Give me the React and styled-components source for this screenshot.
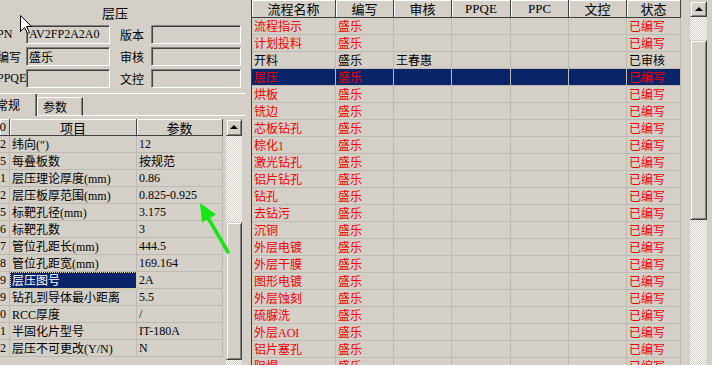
import React from "react";
import styled, { createGlobalStyle, css } from "styled-components";

const BG = "#d4d0c8";
const NAVY = "#0a246a";
const RED = "#f00000";
const LINE = "#bdbab2";

const GlobalStyle = createGlobalStyle`
  html, body { margin: 0; padding: 0; background: ${BG}; }
  body {
    font-family: "Liberation Serif", "Noto Sans CJK SC", serif;
    font-size: 12px;
    color: #000;
  }
  * { box-sizing: border-box; }
`;

const raised = css`
  background: ${BG};
  border: 1px solid;
  border-color: ${BG} #404040 #404040 ${BG};
  box-shadow: inset 1px 1px #fff, inset -1px -1px #808080;
`;

const checker = css`
  background: repeating-conic-gradient(#fff 0 25%, ${BG} 0 50%) 0 0 / 2px 2px;
`;

const Window = styled.div`
  position: relative;
  display: flex;
  width: 712px;
  height: 365px;
  overflow: hidden;
  background: ${BG};
`;

const LeftPanel = styled.div`
  width: 245px;
  flex: none;
  display: flex;
  flex-direction: column;
  overflow: hidden;
`;

const Title = styled.div`
  height: 24px;
  flex: none;
  display: flex;
  align-items: center;
  justify-content: center;
  padding-right: 15px;
  font-size: 13px;
`;

const Form = styled.div`
  flex: none;
  display: grid;
  grid-template-columns: 29px 84px 41px 90px;
  grid-template-rows: repeat(3, 19px);
  row-gap: 3px;
  margin: 1px 0 0 -3px;
`;

const FieldLabel = styled.div`
  display: flex;
  align-items: center;
  white-space: nowrap;
  padding-left: ${(p) => p.$indent || 0}px;
`;

const Field = styled.div`
  border: 1px solid;
  border-color: #808080 #fff #fff #808080;
  box-shadow: inset 1px 1px #404040, inset -1px -1px ${BG};
  padding: 0 2px;
  display: flex;
  align-items: center;
  white-space: nowrap;
  overflow: hidden;
`;

const TabStrip = styled.div`
  flex: none;
  height: 23px;
  margin: 5px 0 0 -10px;
  border-top: 1px solid #fff;
  display: flex;
  align-items: flex-end;
`;

const Tab = styled.div`
  flex: none;
  width: ${(p) => p.$w}px;
  height: ${(p) => (p.$active ? 22 : 19)}px;
  padding-left: 5px;
  display: flex;
  align-items: center;
  border-left: 1px solid #fff;
  border-right: 1px solid #404040;
  box-shadow: inset -1px 0 #808080;
  ${(p) =>
    !p.$active &&
    css`
      border-top: 1px solid #fff;
      border-bottom: 1px solid #fff;
      padding-top: 1px;
    `}
`;

const TabFill = styled.div`
  flex: 1;
  height: 1px;
  background: #fff;
`;

const TabBody = styled.div`
  flex: 1;
  display: flex;
  padding-top: 3px;
  min-height: 0;
`;

const GridBox = styled.div`
  width: ${(p) => p.$w}px;
  flex: none;
  display: flex;
  flex-direction: column;
`;

const Row = styled.div`
  flex: none;
  display: grid;
  grid-template-columns: ${(p) => p.$cols};
  height: ${(p) => p.$h || 17}px;
  background: ${(p) => (p.$selected ? NAVY : "transparent")};
`;

const HeadCell = styled.div`
  border-right: 1px solid #404040;
  border-bottom: 1px solid #404040;
  box-shadow: inset 1px 1px #fff;
  display: flex;
  align-items: center;
  justify-content: ${(p) => (p.$right ? "flex-end" : "center")};
  padding: 0 ${(p) => (p.$right ? 3 : 2)}px 0 2px;
  font-size: 13px;
  white-space: nowrap;
  overflow: hidden;
`;

const Cell = styled.div`
  border-right: 1px solid ${LINE};
  border-bottom: 1px solid ${LINE};
  display: flex;
  align-items: center;
  justify-content: ${(p) => (p.$right ? "flex-end" : "flex-start")};
  padding: 0 ${(p) => (p.$right ? 3 : 2)}px 0 2px;
  color: ${(p) => p.$color || "#000"};
  white-space: nowrap;
  overflow: hidden;
  ${(p) =>
    p.$focus &&
    css`
      background: ${NAVY};
      color: #fff;
      outline: 1px dotted #e6dca0;
      outline-offset: -1px;
    `}
`;

const ScrollBar = styled.div`
  width: ${(p) => p.$w}px;
  flex: none;
  display: flex;
  flex-direction: column;
  margin: ${(p) => p.$margin || "0"};
`;

const ScrollBtn = styled.div`
  ${raised};
  flex: none;
  height: ${(p) => p.$h}px;
  display: flex;
  align-items: center;
  justify-content: center;
  &::after {
    content: "";
    width: 0;
    height: 0;
    border-left: 4px solid transparent;
    border-right: 4px solid transparent;
    border-bottom: 4px solid #000;
    margin-top: -1px;
  }
`;

const Track = styled.div`
  ${checker};
  flex: ${(p) => (p.$h ? "none" : "1")};
  height: ${(p) => (p.$h ? `${p.$h}px` : "auto")};
`;

const Thumb = styled.div`
  ${raised};
  flex: none;
  height: ${(p) => p.$h}px;
`;

const Splitter = styled.div`
  width: 6px;
  flex: none;
`;

const RightPanel = styled.div`
  flex: 1;
  display: flex;
  border-left: 1px solid #404040;
  overflow: hidden;
`;

const Gap = styled.div`
  width: ${(p) => p.$w}px;
  flex: none;
`;

const Overlay = styled.svg`
  position: absolute;
  left: ${(p) => p.$x}px;
  top: ${(p) => p.$y}px;
  pointer-events: none;
  overflow: visible;
`;

const LEFT_COLS = "10px 127px 86px";
const RIGHT_COLS = "84px 58px 58px 59px 58px 58px 54px";

const params = [
  ["2", "纬向(\")", "12"],
  ["5", "每叠板数", "按规范"],
  ["1", "层压理论厚度(mm)", "0.86"],
  ["2", "层压板厚范围(mm)", "0.825-0.925"],
  ["5", "标靶孔径(mm)", "3.175"],
  ["6", "标靶孔数", "3"],
  ["7", "管位孔距长(mm)", "444.5"],
  ["8", "管位孔距宽(mm)", "169.164"],
  ["9", "层压图号", "2A", true],
  ["9", "钻孔到导体最小距离", "5.5"],
  ["0", "RCC厚度", "/"],
  ["1", "半固化片型号", "IT-180A"],
  ["2", "层压不可更改(Y/N)", "N"],
];

const flowNames = [
  "流程指示", "计划投料", "开料", "层压", "烘板", "铣边", "芯板钻孔", "棕化1",
  "激光钻孔", "铝片钻孔", "钻孔", "去钻污", "沉铜", "外层电镀", "外层干膜",
  "图形电镀", "外层蚀刻", "硫脲洗", "外层AOI", "铝片塞孔", "阻焊",
];

const headers = ["流程名称", "编写", "审核", "PPQE", "PPC", "文控", "状态"];

export default function App() {
  return (
    <>
      <GlobalStyle />
      <Window>
        <LeftPanel>
          <Title>层压</Title>
          <Form>
            <FieldLabel>PN</FieldLabel>
            <Field>AV2FP2A2A0</Field>
            <FieldLabel $indent={10}>版本</FieldLabel>
            <Field />
            <FieldLabel>编写</FieldLabel>
            <Field>盛乐</Field>
            <FieldLabel $indent={10}>审核</FieldLabel>
            <Field />
            <FieldLabel>PPQE</FieldLabel>
            <Field />
            <FieldLabel $indent={10}>文控</FieldLabel>
            <Field />
          </Form>
          <TabStrip>
            <Tab $active $w={47}>常规</Tab>
            <Tab $w={46}>参数</Tab>
            <TabFill />
          </TabStrip>
          <TabBody>
            <GridBox $w={223}>
              <Row $cols={LEFT_COLS}>
                <HeadCell $right>0</HeadCell>
                <HeadCell>项目</HeadCell>
                <HeadCell>参数</HeadCell>
              </Row>
              {params.map(([n, name, val, focus], i) => (
                <Row key={i} $cols={LEFT_COLS}>
                  <Cell $right>{n}</Cell>
                  <Cell $focus={focus}>{name}</Cell>
                  <Cell>{val}</Cell>
                </Row>
              ))}
            </GridBox>
            <Gap $w={3} />
            <ScrollBar $w={16}>
              <ScrollBtn $h={17} />
              <Track $h={86} />
              <Thumb $h={138} />
              <Track />
            </ScrollBar>
          </TabBody>
        </LeftPanel>
        <Splitter />
        <RightPanel>
          <GridBox $w={429}>
            <Row $cols={RIGHT_COLS} $h={18}>
              {headers.map((h) => (
                <HeadCell key={h}>{h}</HeadCell>
              ))}
            </Row>
            {flowNames.map((name, i) => {
              const approved = name === "开料";
              const color = approved ? "#000" : RED;
              return (
                <Row key={name} $cols={RIGHT_COLS} $selected={name === "层压"}>
                  <Cell $color={color}>{name}</Cell>
                  <Cell $color={color}>盛乐</Cell>
                  <Cell $color={color}>{approved ? "王春惠" : ""}</Cell>
                  <Cell />
                  <Cell />
                  <Cell />
                  <Cell $color={color}>{approved ? "已审核" : "已编写"}</Cell>
                </Row>
              );
            })}
          </GridBox>
          <Gap $w={9} />
          <ScrollBar $w={17} $margin="1px 0 0 0">
            <ScrollBtn $h={16} />
            <Track $h={23} />
            <Thumb $h={180} />
            <Track />
          </ScrollBar>
        </RightPanel>

        <Overlay $x={20} $y={15} width="13" height="20" viewBox="0 0 13 20">
          <path
            d="M0.5 0.5 L0.5 16.5 L4.5 12.5 L7.5 18.5 L9.5 17.5 L6.5 11.5 L11.5 11.5 Z"
            fill="#fff"
            stroke="#000"
            strokeWidth="1"
          />
        </Overlay>
        <Overlay $x={195} $y={198} width="40" height="60" viewBox="0 0 40 60">
          <line x1="33" y1="54" x2="12" y2="18" stroke="#14e614" strokeWidth="3.5" strokeLinecap="round" />
          <polygon points="5,5 21,16.6 7,24.6" fill="#14e614" />
        </Overlay>
      </Window>
    </>
  );
}
